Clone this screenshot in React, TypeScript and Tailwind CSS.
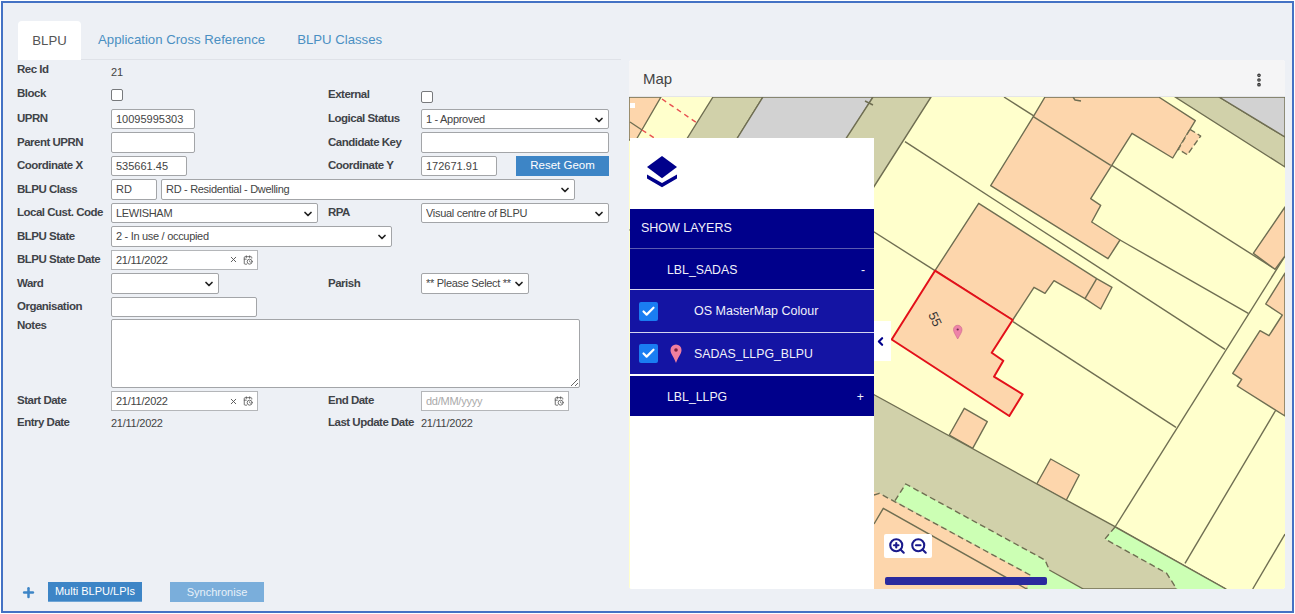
import type { ReactNode } from 'react';
import { CalendarClock, Check, ChevronDown, ChevronLeft, MoreVertical, Plus, X, ZoomIn, ZoomOut } from 'lucide-react';

const inputCls =
  'block h-full bg-white border border-[#a3a5a8] rounded-[2px] px-[4px] text-[11px] text-[#444] outline-none';

function Label({ children, w = 'w-[94px]' }: { children: ReactNode; w?: string }) {
  return <span className={`${w} shrink-0 text-[11.5px] font-bold tracking-[-0.5px] text-[#3f4348] whitespace-nowrap`}>{children}</span>;
}

function Row({ children }: { children: ReactNode }) {
  return <div className="flex items-center h-[23.5px] py-[1.5px]">{children}</div>;
}

function Field({ w, value = '' }: { w: string; value?: string }) {
  return <input readOnly value={value} className={`${inputCls} ${w}`} />;
}

function Select({ w, value = '' }: { w: string; value?: string }) {
  return (
    <div className={`relative h-full ${w}`}>
      <select defaultValue={value} className={`${inputCls} w-full appearance-none tracking-[-0.3px]`}>
        <option>{value}</option>
      </select>
      <ChevronDown size={12} strokeWidth={3.5} className="absolute right-[4px] top-[5px] text-[#222] pointer-events-none" />
    </div>
  );
}

function DateField({ w, value, clear = true }: { w: string; value?: string; clear?: boolean }) {
  return (
    <div className={`${w} h-full flex items-center bg-white border border-[#b4b6b9] px-[4px] text-[11px] tracking-[-0.25px]`}>
      <span className={value ? 'text-[#444] flex-1 pt-px' : 'text-[#aaa] flex-1 pt-px'}>{value ?? 'dd/MM/yyyy'}</span>
      {clear && <X size={9} strokeWidth={2.5} className="text-[#555] mr-[5px]" />}
      <CalendarClock size={10} className="text-[#555]" />
    </div>
  );
}

function Cell({ children }: { children?: ReactNode }) {
  return <div className="flex items-center h-full w-[311px] shrink-0">{children}</div>;
}

function Box({ className = '' }: { className?: string }) {
  return <span className={`block w-[12px] h-[12px] bg-white border border-[#77797c] rounded-[2px] ${className}`} />;
}

function MapDrawing() {
  const line = '#6f6e52';
  const road = '#d1d1aa';
  const house = '#fdd6ac';
  const green = '#ccffb4';
  return (
    <svg viewBox="629 97 656 492" className="block w-full h-full bg-[#ffffcc]">
      <g stroke={line} strokeWidth="1.4" strokeLinejoin="round">
        {/* top roads */}
        <polygon points="713,97 763,97 680,230 630,230" fill={road} />
        <polygon points="763,97 873,97 790,230 680,230" fill="#d2d2d2" />
        <polygon points="873,97 931,97 840,240 780,240" fill={road} />
        <polygon points="1175,97 1219,97 1285,137 1285,167" fill={road} />
        <polygon points="1219,97 1285,97 1285,137" fill="#d2d2d2" />
        {/* top left corner */}
        <polygon points="629,97 661,97 636,140 629,140" fill={house} />
        <line x1="630" y1="122" x2="642" y2="130" />
        <path d="M662,99 L697,123 M642,130 L656,139" stroke="#e85050" strokeDasharray="5 4" fill="none" />
        <rect x="630" y="103" width="5" height="5" fill="#fff" stroke="none" />
        {/* boundaries */}
        <line x1="1004" y1="97" x2="1275" y2="269" />
        <line x1="905" y1="141.7" x2="1225" y2="349.3" />
        <line x1="1120" y1="240" x2="1248.3" y2="313.3" />
        <line x1="1285" y1="256" x2="1115" y2="527" />
        <line x1="860" y1="223" x2="935" y2="270.7" />
        <line x1="1013" y1="321.7" x2="1176" y2="427.3" />
        <line x1="1283" y1="398" x2="1185" y2="563.3" />
        <line x1="1285" y1="534" x2="1252.7" y2="589" />
        {/* top house */}
        <polygon
          points="1045,97 1033.3,116.7 990.7,185.7 1108,258.7 1120,240 1091.7,222 1100.7,205.3 1090.7,198.7 1132,133.3 1172.7,158 1195.3,120.7 1158.7,97"
          fill={house}
        />
        <line x1="1033.3" y1="116.7" x2="1110.7" y2="165.3" />
        <polygon
          points="1190,129.3 1200.7,136 1187.3,154.7 1178.3,149.3"
          fill={house}
          strokeDasharray="6 3"
        />
        <path d="M1073,97 l2,3 l6,1 M865,101 l8,4" fill="none" />
        {/* right houses */}
        <polygon points="1285,207 1253.3,253.3 1275,269.3 1285,256" fill={house} />
        <polygon
          points="1285,273 1265.7,304 1282.3,315 1269,335.7 1260,330.7 1232.7,373.3 1241.7,379.3 1237.3,386 1285,416"
          fill={house}
        />
        {/* house next to 55 */}
        <polygon
          points="978.7,203.3 935,270.7 1012.7,320 1034,287.3 1045,293.3 1054,280.7 1085,298.7 1100.7,309 1112,287.3 1096.7,278.7"
          fill={house}
        />
        <line x1="1096.7" y1="278.7" x2="1085" y2="298.7" />
        {/* sheds */}
        <polygon points="964.3,408.3 987.3,421.7 972.7,448.3 949.3,435" fill={house} />
        <polygon points="1050.7,459 1079.3,475 1066,500.7 1036.7,484" fill={house} />
        {/* lower road */}
        <polygon points="860,387 1115,526.7 1226,589 860,589" fill={road} />
        <polygon points="1115,527 1226,589 1176.7,589 1166.7,573.3 1156.7,567.7 1105,539" fill={green} stroke="none" />
        <path d="M1115,527 L1226,589" fill="none" />
        <path d="M1115,527 L1105,539 L1156.7,567.7 L1166.7,573.3 L1176.7,589" fill="none" strokeDasharray="6 3.5" />
        <polygon points="905.7,484 1045,560 1049.3,570 1083.3,589 1026.7,589 1030,575 895,500.7" fill={green} stroke="none" />
        <path d="M895,500.7 L905.7,484 L1045,560 L1049.3,570" fill="none" strokeDasharray="6 3.5" />
        <path d="M1049.3,570 L1083.3,589" fill="none" />
        <polygon points="860,488 879.3,493.3 1030,575 1026.7,589 860,589" fill={house} stroke="none" />
        <path d="M874,495 L879.3,493.3 L1030,575 L1026.7,589" fill="none" strokeDasharray="6 3.5" />
        <path d="M874,524 L883.3,508.3 L1026.7,589" fill="none" />
      </g>
      {/* selected BLPU */}
      <polygon
        points="935,270.7 1012.7,320 991.7,352.7 1003.3,360.7 994,376.7 1022.7,394.3 1009.3,416 891.7,339.5"
        fill={house}
        stroke="#e3101a"
        strokeWidth="2"
        strokeLinejoin="round"
      />
      <text transform="translate(928 314.5) rotate(65)" fontSize="13" fill="#333" fontFamily="Liberation Sans">
        55
      </text>
      <path d="M957.7,339 C955,334 953.5,332 953.5,329.5 A4.2,4.2 0 0 1 962,329.5 C962,332 960.5,334 957.7,339 Z" fill="#ee82a8" stroke="#c9668c" strokeWidth=".6" />
      <circle cx="957.7" cy="329.5" r="1.1" fill="#703050" />
    </svg>
  );
}

function LayerRow({ children, className }: { children: ReactNode; className: string }) {
  return <div className={`flex items-center text-[#f1f1fa] ${className}`}>{children}</div>;
}

function Tick() {
  return (
    <span className="w-[19px] h-[19px] ml-[9px] shrink-0 rounded-[2px] bg-[#1a7df2] flex items-center justify-center">
      <Check size={15} strokeWidth={3.5} className="text-white" />
    </span>
  );
}

function LayerPanel() {
  return (
    <div className="absolute left-px top-[41px] bottom-0 w-[244px] bg-white">
      <div className="h-[71px] pl-[17px] pt-[18px]">
        <svg viewBox="0 0 30 32" className="w-[30px] h-[32px] fill-[#00008b]">
          <path d="M15 0 L30 11 L15 22.300 L0 11 Z" />
          <path d="M0 18.500 L15 27 L30 18.500 V22.500 L15 31.300 L0 22.500 Z" />
        </svg>
      </div>
      <LayerRow className="h-[40px] text-[12.5px] bg-[#00008b] pl-[11px] border-b border-[#5a5ab0]">SHOW LAYERS</LayerRow>
      <LayerRow className="h-[41px] text-[12.3px] pt-[3px] bg-[#00008b] pl-[37px] pr-[9px] justify-between border-b border-[#d5d5ee]">
        <span>LBL_SADAS</span>
        <span>-</span>
      </LayerRow>
      <LayerRow className="h-[43px] text-[12.5px] bg-[#1414a3] border-b border-[#d5d5ee]">
        <Tick />
        <span className="ml-[36px]">OS MasterMap Colour</span>
      </LayerRow>
      <LayerRow className="h-[43px] text-[12.3px] bg-[#1414a3] border-b-2 border-white">
        <Tick />
        <svg viewBox="0 0 12 19" className="w-[12px] h-[19px] ml-[12px]">
          <path d="M6 19 C4 13 .5 10 .5 6 A5.500 5.500 0 0 1 11.500 6 C11.500 10 8 13 6 19 Z" fill="#ef7f9f" />
          <circle cx="6" cy="6" r="1.800" fill="#7a1f3d" />
        </svg>
        <span className="ml-[12px] pt-[2px]">SADAS_LLPG_BLPU</span>
      </LayerRow>
      <LayerRow className="h-[40px] text-[12.3px] pt-[2px] bg-[#00008b] pl-[37px] pr-[10px] justify-between">
        <span>LBL_LLPG</span>
        <span>+</span>
      </LayerRow>
      <div className="absolute left-[244px] top-[183px] w-[17px] h-[40px] bg-white flex items-center">
        <ChevronLeft size={13} strokeWidth={4} className="text-[#00008b]" />
      </div>
    </div>
  );
}

export default function App() {
  return (
    <div className="w-[1295px] h-[614px] p-px bg-white font-['Liberation_Sans',Arial,sans-serif]">
      <div className="flex h-full border-2 border-[#4472c4] bg-[#edf0f5]">
        <div className="w-[626px] shrink-0 flex flex-col pt-[18px]">
          <div className="flex items-end h-[39px] ml-[15px] mr-[8px] border-b border-[#dfe2e8] text-[13.2px] text-[#4a8fc2]">
            <div className="w-[63px] h-[39px] -mb-px flex items-center justify-center bg-white rounded-t-[4px] text-[#555]">BLPU</div>
            <div className="ml-[17px] h-full flex items-center">Application Cross Reference</div>
            <div className="ml-[32px] h-full flex items-center">BLPU Classes</div>
          </div>
          <div className="pl-[14px]">
            <Row>
              <Label>
                <span className="relative -top-[2px]">Rec Id</span>
              </Label>
              <span className="text-[11px] text-[#444]">21</span>
            </Row>
            <Row>
              <Cell>
                <Label>
                  <span className="relative -top-[2px]">Block</span>
                </Label>
                <Box />
              </Cell>
              <Label w="w-[93px]">
                <span className="relative -top-px">External</span>
              </Label>
              <Box className="relative top-[2px]" />
            </Row>
            <Row>
              <Cell>
                <Label>UPRN</Label>
                <Field w="w-[84px]" value="10095995303" />
              </Cell>
              <Label w="w-[93px]">Logical Status</Label>
              <Select w="w-[188px]" value="1 - Approved" />
            </Row>
            <Row>
              <Cell>
                <Label>Parent UPRN</Label>
                <Field w="w-[84px]" />
              </Cell>
              <Label w="w-[93px]">Candidate Key</Label>
              <Field w="w-[188px]" />
            </Row>
            <Row>
              <Cell>
                <Label>Coordinate X</Label>
                <Field w="w-[76px]" value="535661.45" />
              </Cell>
              <Label w="w-[93px]">Coordinate Y</Label>
              <Field w="w-[76px]" value="172671.91" />
              <button className="ml-[19px] w-[93px] h-full bg-[#3d85c6] text-white text-[11.5px]">Reset Geom</button>
            </Row>
            <Row>
              <Label>BLPU Class</Label>
              <Field w="w-[46px]" value="RD" />
              <div className="w-[4px]" />
              <Select w="w-[414px]" value="RD - Residential - Dwelling" />
            </Row>
            <Row>
              <Cell>
                <Label>Local Cust. Code</Label>
                <Select w="w-[207px]" value="LEWISHAM" />
              </Cell>
              <Label w="w-[93px]">RPA</Label>
              <Select w="w-[188px]" value="Visual centre of BLPU" />
            </Row>
            <Row>
              <Label>BLPU State</Label>
              <Select w="w-[281px]" value="2 - In use / occupied" />
            </Row>
            <Row>
              <Label>BLPU State Date</Label>
              <DateField w="w-[147px]" value="21/11/2022" />
            </Row>
            <Row>
              <Cell>
                <Label>Ward</Label>
                <Select w="w-[108px]" />
              </Cell>
              <Label w="w-[93px]">Parish</Label>
              <Select w="w-[108px]" value="** Please Select **" />
            </Row>
            <Row>
              <Label>Organisation</Label>
              <Field w="w-[146px]" />
            </Row>
            <div className="flex items-start h-[71.5px]">
              <Label>
                <span className="relative top-[-2px]">Notes</span>
              </Label>
              <textarea readOnly className="w-[469px] h-[69px] bg-white border border-[#a3a5a8] rounded-[2px] outline-none" />
            </div>
            <div className="flex items-center h-[22px] py-px">
              <Cell>
                <Label>Start Date</Label>
                <DateField w="w-[147px]" value="21/11/2022" />
              </Cell>
              <Label w="w-[93px]">End Date</Label>
              <DateField w="w-[148px]" clear={false} />
            </div>
            <div className="flex items-center h-[22px] text-[11px] tracking-[-0.25px] text-[#444]">
              <Cell>
                <Label>Entry Date</Label>
                <span>21/11/2022</span>
              </Cell>
              <Label w="w-[93px]">Last Update Date</Label>
              <span>21/11/2022</span>
            </div>
          </div>
          <div className="mt-auto mb-[9px] ml-[18px] flex items-center">
            <Plus size={15} strokeWidth={4} className="text-[#3d85c6]" />
            <button className="ml-[12px] w-[94px] h-[20px] bg-[#3d85c6] text-white text-[11px] border-b border-[#6fa5d6]">Multi BLPU/LPIs</button>
            <button className="ml-[28px] w-[94px] h-[20px] bg-[#7aaedb] text-[#e8f1f9] text-[11px]">Synchronise</button>
          </div>
        </div>
        <div className="flex-1 mt-[57px] mr-[7px] mb-[22px] flex flex-col rounded-[3px] bg-white overflow-hidden">
          <div className="h-[37px] shrink-0 flex items-center justify-between pt-[2px] pl-[14px] pr-[18px] bg-[#f5f5f6] border-b border-[#e4e5e8] text-[15px] text-[#444]">
            <span>Map</span>
            <MoreVertical size={16} strokeWidth={3.5} className="relative top-px text-[#333]" />
          </div>
          <div className="relative flex-1 min-h-0">
            <MapDrawing />
            <LayerPanel />
            <div className="absolute left-[255px] top-[437px] w-[48px] h-[24px] bg-white rounded-[2px] flex items-center justify-center gap-[4px] text-[#1a1a8c]">
              <ZoomIn size={18} strokeWidth={2.8} />
              <ZoomOut size={18} strokeWidth={2.8} />
            </div>
            <div className="absolute left-[256px] top-[480px] w-[162px] h-[8px] rounded-[2px] bg-[#2a2a9e]" />
          </div>
        </div>
      </div>
    </div>
  );
}
